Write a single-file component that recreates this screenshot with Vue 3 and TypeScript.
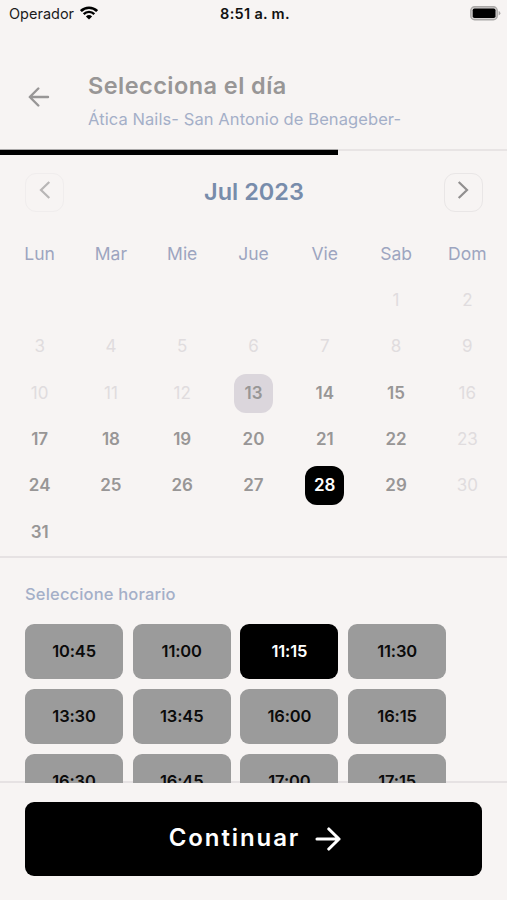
<script setup lang="ts">
import { ref } from 'vue'

type DayState = 'off' | 'open' | 'today'

interface Day {
  n: number
  state: DayState
}

const weekdays: string[] = ['Lun', 'Mar', 'Mie', 'Jue', 'Vie', 'Sab', 'Dom']
const leadingBlanks = 5

const days: Day[] = Array.from({ length: 31 }, (_, i) => {
  const n = i + 1
  const sunday = (leadingBlanks + i) % 7 === 6
  const state: DayState = n === 13 ? 'today' : n < 13 || sunday ? 'off' : 'open'
  return { n, state }
})

const slots: string[] = [
  '10:45', '11:00', '11:15', '11:30',
  '13:30', '13:45', '16:00', '16:15',
  '16:30', '16:45', '17:00', '17:15',
]

const selectedDay = ref<number>(28)
const selectedSlot = ref<string>('11:15')

function pickDay(day: Day): void {
  if (day.state !== 'off') selectedDay.value = day.n
}
</script>

<template>
  <div class="screen">
    <div class="status">
      <div class="carrier">
        <span>Operador</span>
        <svg class="wifi" width="18" height="14" viewBox="0 0 18 14" fill="none" stroke="#000">
          <path d="M0.9 5.1 A11.5 11.5 0 0 1 17.1 5.1" stroke-width="2.7" />
          <path d="M3.7 8.1 A7.5 7.5 0 0 1 14.3 8.1" stroke-width="2.4" />
          <path d="M9 13.6 L5.9 10.4 A4.5 4.5 0 0 1 12.1 10.4 Z" fill="#000" stroke="none" />
        </svg>
      </div>
      <span class="clock">8:51 a. m.</span>
      <svg class="battery" width="31" height="15" viewBox="0 0 31 15">
        <rect x="0.8" y="0.8" width="26.4" height="12.9" rx="3.8" fill="#d4d1d0" stroke="#aaa8a7" stroke-width="1.4" />
        <rect x="2.7" y="2.5" width="22.8" height="9.5" rx="1.8" fill="#000" />
        <path d="M28.6 5 Q30.4 5.6 30.4 7.2 Q30.4 8.8 28.6 9.4 Z" fill="#aaa8a7" />
      </svg>
    </div>

    <header class="header">
      <svg class="back" width="22" height="20" viewBox="0 0 22 20" fill="none" stroke="#989696" stroke-width="2.4" stroke-linecap="round" stroke-linejoin="round">
        <path d="M20 10 H2 M10.3 1.5 L1.8 10 L10.3 18.5" />
      </svg>
      <div class="titles">
        <h1>Selecciona el día</h1>
        <p>Ática Nails- San Antonio de Benageber-</p>
      </div>
    </header>
    <div class="progress"><div class="progress-fill"></div></div>

    <section class="calendar">
      <div class="month">
        <button class="nav prev" type="button">
          <svg width="12" height="18" viewBox="0 0 12 18" fill="none" stroke="#b8b6b6" stroke-width="2.2">
            <path d="M10.3 1 L2 9 L10.3 17" />
          </svg>
        </button>
        <h2>Jul 2023</h2>
        <button class="nav" type="button">
          <svg width="12" height="18" viewBox="0 0 12 18" fill="none" stroke="#918f8f" stroke-width="2.2">
            <path d="M1.7 1 L10 9 L1.7 17" />
          </svg>
        </button>
      </div>
      <div class="week">
        <span v-for="w in weekdays" :key="w">{{ w }}</span>
      </div>
      <div class="days">
        <span v-for="b in leadingBlanks" :key="'b' + b"></span>
        <div v-for="d in days" :key="d.n" class="cell">
          <span class="day" :class="[d.state, { selected: d.n === selectedDay }]" @click="pickDay(d)">{{ d.n }}</span>
        </div>
      </div>
    </section>

    <section class="schedule">
      <h3>Seleccione horario</h3>
      <div class="slots">
        <button
          v-for="s in slots"
          :key="s"
          type="button"
          class="slot"
          :class="{ chosen: s === selectedSlot }"
          @click="selectedSlot = s"
        >{{ s }}</button>
      </div>
    </section>

    <footer class="footer">
      <button class="continue" type="button">
        <span>Continuar</span>
        <svg width="26" height="24" viewBox="0 0 26 24" fill="none" stroke="#fff" stroke-width="3.1" stroke-linecap="round" stroke-linejoin="round">
          <path d="M2 12 H24 M13.8 2 L24 12 L13.8 22" />
        </svg>
      </button>
    </footer>
  </div>
</template>

<style>
body {
  background: #f7f4f3;
}
</style>

<style scoped>
.screen {
  display: flex;
  flex-direction: column;
  width: 507px;
  height: 900px;
  overflow: hidden;
  background: #f7f4f3;
  font-family: Inter, 'Liberation Sans', sans-serif;
}
h1, h2, h3, p {
  margin: 0;
}
button {
  border: 0;
  padding: 0;
  font-family: inherit;
}
.status {
  display: grid;
  grid-template-columns: 1fr auto 1fr;
  align-items: center;
  height: 27px;
  box-sizing: border-box;
  padding: 0 6px 0 9px;
  font-size: 14.5px;
  line-height: 27px;
  color: #1c1b1b;
}
.carrier {
  display: flex;
  align-items: center;
  gap: 6px;
}
.wifi {
  margin-top: -1px;
}
.clock {
  font-weight: 600;
  letter-spacing: 0.3px;
  color: #111;
}
.battery {
  justify-self: end;
}
.header {
  display: flex;
  align-items: flex-start;
  height: 122px;
  box-sizing: border-box;
  padding: 42px 28px 0;
}
.back {
  margin-top: 18px;
}
.titles {
  margin-left: 38px;
  white-space: nowrap;
}
h1 {
  font-size: 23.5px;
  font-weight: 600;
  letter-spacing: 0.45px;
  line-height: 34px;
  color: #989696;
}
.titles p {
  font-size: 16.5px;
  letter-spacing: 0.09px;
  line-height: 32px;
  color: #a4afc8;
}
.progress {
  height: 6px;
  box-shadow: inset 0 2px #e8e4e4;
}
.progress-fill {
  width: 338px;
  height: 6px;
  border-top: 1px solid #aaa8a8;
  box-sizing: border-box;
  background: #000;
}
.calendar {
  height: 401px;
  border-bottom: 2px solid #e6e2e3;
}
.month {
  display: flex;
  align-items: center;
  justify-content: space-between;
  padding: 18px 24px 0 25px;
}
.nav {
  display: flex;
  align-items: center;
  justify-content: center;
  width: 39px;
  height: 39px;
  padding-bottom: 5px;
  border: 1.5px solid #e9e6e6;
  border-radius: 11px;
  box-sizing: border-box;
  background: transparent;
}
.nav.prev {
  border-color: #f0eded;
}
h2 {
  padding-bottom: 2px;
  font-size: 23.5px;
  font-weight: 600;
  color: #788cab;
}
.week, .days {
  display: grid;
  grid-template-columns: repeat(7, 1fr);
  padding: 0 4px;
}
.week {
  margin-top: 30px;
  font-size: 17.5px;
  line-height: 24px;
  text-align: center;
  color: #9da5c0;
}
.days {
  margin-top: 11.2px;
  grid-auto-rows: 46.4px;
}
.cell {
  display: flex;
  align-items: center;
  justify-content: center;
}
.day {
  width: 39px;
  height: 39px;
  border-radius: 12px;
  font-size: 17px;
  line-height: 39px;
  text-align: center;
}
.off {
  color: #e0dcde;
}
.open {
  font-weight: 600;
  color: #989696;
}
.today {
  font-weight: 600;
  color: #989696;
  background: #dbd6dc;
}
.selected {
  color: #fff;
  background: #000;
}
.schedule {
  height: 225px;
  flex: none;
  box-sizing: border-box;
  padding: 24px 25px 0;
  overflow: hidden;
  box-shadow: inset 0 -2px #e6e2e3;
}
h3 {
  font-size: 16.5px;
  font-weight: 500;
  letter-spacing: 0.17px;
  line-height: 24px;
  color: #a4afc8;
}
.slots {
  display: grid;
  grid-template-columns: repeat(4, 98px);
  grid-auto-rows: 55px;
  gap: 10px 9.7px;
  margin-top: 18px;
}
.slot {
  padding-bottom: 1.5px;
  border-radius: 9px;
  background: #9b9b9b;
  font-size: 16.5px;
  font-weight: 600;
  letter-spacing: -0.15px;
  color: #0b0b0b;
}
.slot.chosen {
  background: #000;
  color: #fff;
}
.footer {
  padding: 19px 25px 0;
}
.continue {
  display: flex;
  align-items: center;
  justify-content: center;
  gap: 15px;
  width: 457px;
  height: 74px;
  padding: 0 0 1px 3px;
  border-radius: 9px;
  background: #000;
  font-size: 24px;
  font-weight: 600;
  letter-spacing: 1.9px;
  color: #fff;
}
.continue span {
  padding-bottom: 2px;
}
</style>
